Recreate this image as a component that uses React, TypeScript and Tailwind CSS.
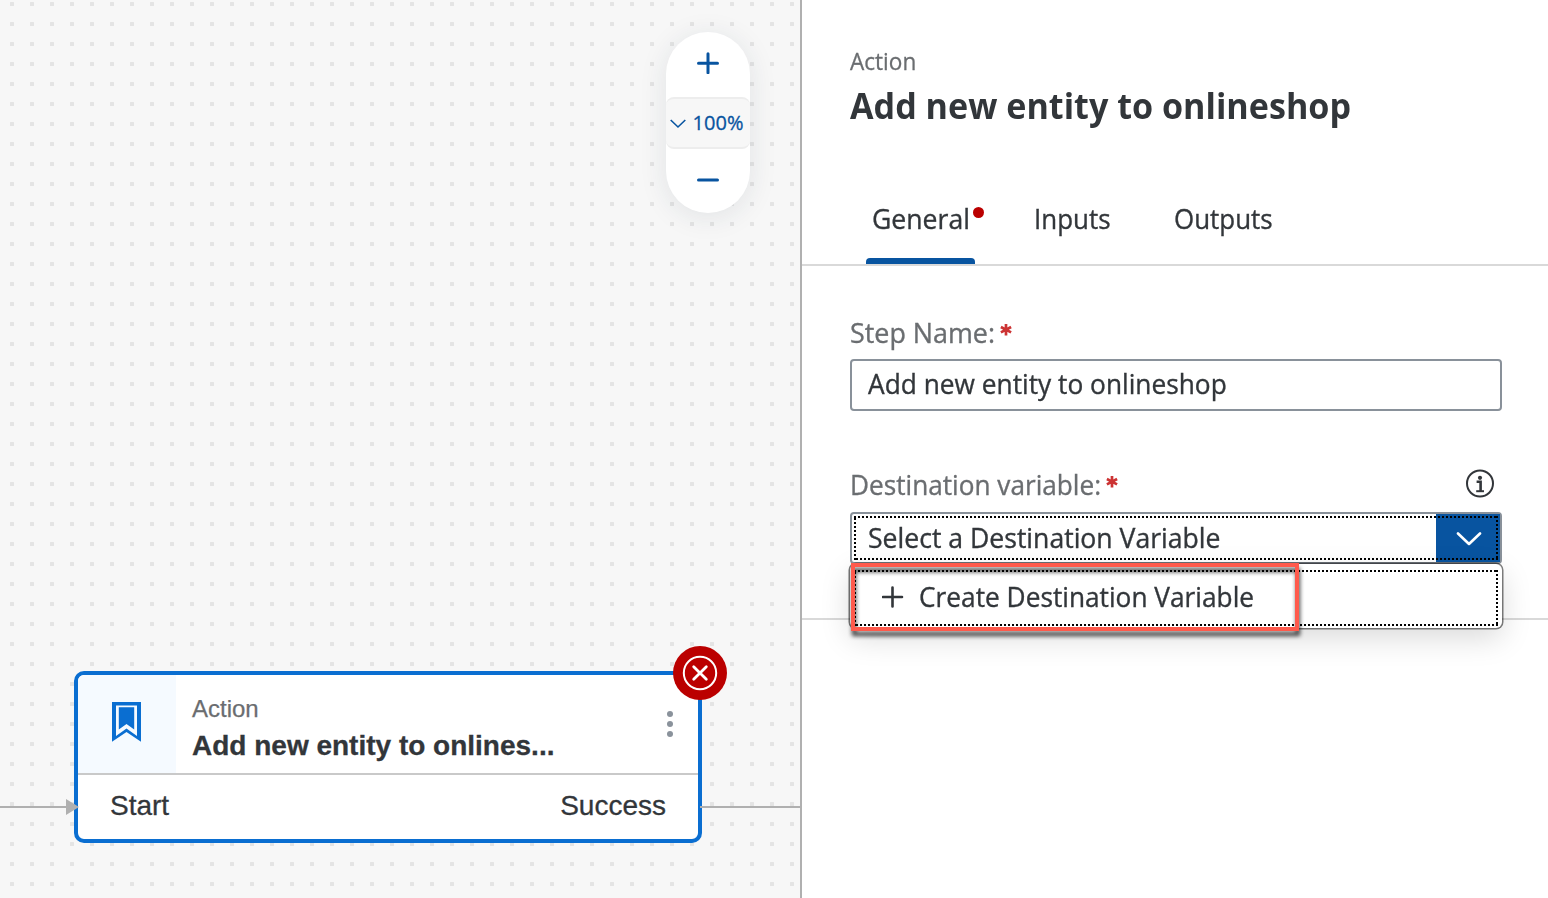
import React from "react";

const UI = "font-['Open_Sans','Noto_Sans',sans-serif]";

function Label({ text, className }: { text: string; className: string }) {
  return (
    <div className="flex items-start whitespace-nowrap">
      <span className={`block origin-left text-[27px] leading-9 text-[#6a6d70] [-webkit-text-stroke:0.35px] ${className}`}>{text}</span>
      <svg className="mt-[9px] block h-3 w-3" viewBox="0 0 12 12" stroke="#cc3333" strokeWidth="2.7">
        <path d="M6 0v11.4M.9 3l10.2 5.4M.9 8.4L11.1 3" />
      </svg>
    </div>
  );
}

function ZoomControl() {
  return (
    <div className="absolute top-8 left-[666px] flex h-[181px] w-[84px] flex-col rounded-[42px] bg-white shadow-[0_4px_28px_rgba(34,53,72,0.1)]">
      <button className="flex h-[65px] items-center justify-center pb-[3px]">
        <svg width="22" height="22" viewBox="0 0 22 22" stroke="#0854a0" strokeWidth="3" strokeLinecap="round">
          <path d="M11 1.8v19M1.5 11.3h19" />
        </svg>
      </button>
      <button className="flex h-[52px] items-center rounded-[8px] border-y-2 border-[#ededed] bg-[#f7f7f7] pl-[3.5px] text-[#0854a0]">
        <svg className="mt-0.5 shrink-0" width="16" height="10" viewBox="0 0 16 10" fill="none" stroke="#0854a0" strokeWidth="1.6">
          <path d="M.7 1L8 8L15.3 1" />
        </svg>
        <span className={`${UI} ml-[7px] text-[20px] leading-6 tracking-[0.1px] [-webkit-text-stroke:0.3px]`}>100%</span>
      </button>
      <button className="flex flex-1 items-center justify-center pb-0.5">
        <svg width="22" height="4" viewBox="0 0 22 4" stroke="#0854a0" strokeWidth="3" strokeLinecap="round">
          <path d="M1.5 2h19" />
        </svg>
      </button>
    </div>
  );
}

function ActionNode() {
  return (
    <div className="absolute top-[671px] left-[74px] flex h-[172px] w-[628px] flex-col rounded-[10px] border-4 border-[#0a6ed1] bg-white font-['Liberation_Sans',sans-serif] text-[#32363a]">
      <div className="flex h-[100px] border-b-2 border-[#c9c9c9]">
        <div className="w-[98px] rounded-tl-md bg-[#f5faff] pt-[27px] pl-[34px]">
          <svg width="29" height="40" viewBox="0 0 29 40" fill="#0a6ed1">
            <path fillRule="evenodd" d="M0 0H29V39.8L14.5 30L0 39.8ZM4 3.4V34L14.5 26.4L25 34V3.4Z" />
            <path d="M6.8 5.2H22.2V27.6L14.5 22L6.8 27.6Z" />
          </svg>
        </div>
        <div className="flex-1 pt-[18px] pl-4 whitespace-nowrap">
          <div className="text-[24px] leading-8 text-[#6a6d70] [-webkit-text-stroke:0.25px]">Action</div>
          <div className="text-[28px] leading-[42px] font-bold [-webkit-text-stroke:0.3px]">Add new entity to onlines...</div>
        </div>
        <div className="w-[38px] pt-9">
          <svg width="16" height="26" viewBox="0 0 16 26" fill="#8a929b">
            <circle cx="10" cy="3" r="3" /><circle cx="10" cy="13" r="3" /><circle cx="10" cy="23" r="3" />
          </svg>
        </div>
      </div>
      <div className="flex flex-1 items-center justify-between px-8 pb-0.5 text-[28px] [-webkit-text-stroke:0.3px]">
        <span>Start</span>
        <span>Success</span>
      </div>
    </div>
  );
}

function Canvas() {
  return (
    <main className="relative h-full w-[802px] shrink-0 overflow-hidden border-r-2 border-[#b0b0b0] bg-[#f7f7f7]">
      <svg className="absolute inset-0 h-full w-full">
        <defs>
          <pattern id="grid" width="20" height="20" patternUnits="userSpaceOnUse">
            <rect x="10" y="2" width="4" height="4" rx="0.5" fill="#e4e4e4" />
          </pattern>
        </defs>
        <rect width="100%" height="100%" fill="url(#grid)" />
      </svg>
      <ZoomControl />
      <ActionNode />
      <svg className="absolute top-[798px] left-0 h-[18px] w-full" fill="#b0b0b0">
        <path d="M0 8H66V10H0ZM66 1L79 9L66 17ZM700 8H800V10H700Z" />
      </svg>
      <svg className="absolute top-[646px] left-[673px]" width="54" height="54" viewBox="0 0 54 54" fill="none" stroke="white">
        <circle cx="27" cy="27" r="27" fill="#bb0000" stroke="none" />
        <circle cx="27" cy="27" r="16.2" strokeWidth="2" />
        <path d="M20.7 20.7L33.3 33.3M33.3 20.7L20.7 33.3" strokeWidth="2.8" strokeLinecap="round" />
      </svg>
    </main>
  );
}

function DottedFrame({ box }: { box: string }) {
  return (
    <svg className={`pointer-events-none absolute ${box}`} stroke="black" strokeWidth="4" strokeDasharray="2 2" fill="none" overflow="hidden">
      <rect width="100%" height="100%" />
    </svg>
  );
}

function DestinationSelect() {
  return (
    <div className="relative h-[52px] w-[652px] rounded border-2 border-[#89919a] bg-white [-webkit-text-stroke:0.35px]">
      <div className="flex h-full">
        <div className="flex flex-1 items-center pl-4">
          <span className="origin-left scale-x-[0.985] text-[27px] whitespace-nowrap">Select a Destination Variable</span>
        </div>
        <div className="flex w-16 items-center justify-center bg-[#0854a0]">
          <svg className="mt-0.5 ml-0.5" width="26" height="14" viewBox="0 0 26 14" fill="none" stroke="white" strokeWidth="2.6" strokeLinecap="round" strokeLinejoin="round">
            <path d="M2 1.5L13 12L24 1.5" />
          </svg>
        </div>
      </div>
      <DottedFrame box="top-[2px] left-[2px] h-[44px] w-[644px]" />
      <div className="absolute top-[50px] left-[-2px] h-[64px] w-[652px] rounded-md bg-white shadow-[0_0_0_1.5px_rgba(0,0,0,0.5),0_10px_30px_rgba(0,0,0,0.15)]">
        <div className="flex h-full items-center pt-0.5 pl-8">
          <svg width="22" height="22" viewBox="0 0 22 22" stroke="#32363a" strokeWidth="2.6" strokeLinecap="round">
            <path d="M10.5 1.5v19M1 11h19" />
          </svg>
          <span className="ml-[15px] origin-left scale-x-[0.973] text-[27px] whitespace-nowrap">Create Destination Variable</span>
        </div>
        <DottedFrame box="top-[6px] left-[4px] h-[56px] w-[644px]" />
        <div className="absolute top-[-1px] left-[1px] h-[68px] w-[448px] border-4 border-[#ff5a4c] drop-shadow-[1px_5px_2px_rgba(0,0,0,0.75)]" />
      </div>
    </div>
  );
}

function Panel() {
  return (
    <aside className={`${UI} flex h-full flex-1 flex-col bg-white text-[#32363a]`}>
      <header className="h-[170px] pt-[45px] pl-12 whitespace-nowrap">
        <div className="origin-left scale-x-[0.96] text-[23.5px] leading-8 text-[#6a6d70] [-webkit-text-stroke:0.3px]">Action</div>
        <h1 className="origin-left scale-x-[0.975] text-[35px] leading-[58px] font-bold">Add new entity to onlineshop</h1>
      </header>
      <nav className="flex h-[96px] border-b-2 border-[#d9d9d9] pl-16 text-[27px] leading-[98px] [-webkit-text-stroke:0.35px]">
        <div className="relative w-[109px] pl-1.5">
          <span className="inline-block origin-left scale-x-[0.985]">General</span>
          <span className="absolute top-[37px] left-[107px] h-[11px] w-[11px] rounded-full bg-[#bb0000]" />
          <span className="absolute bottom-0 left-0 h-1.5 w-full rounded-t bg-[#0854a0]" />
        </div>
        <div className="ml-[58.5px] w-[140px]"><span className="inline-block origin-left scale-x-[0.96]">Inputs</span></div>
        <div><span className="inline-block origin-left scale-x-[0.96]">Outputs</span></div>
      </nav>
      <section className="h-[354px] border-b-2 border-[#d9d9d9] pt-[49px] pl-12">
        <div className="flex h-[44px]"><Label text="Step Name:" className="w-[150px] scale-x-[0.995]" /></div>
        <div className="flex h-[52px] w-[652px] items-center rounded border-2 border-[#89919a] pb-px pl-4 [-webkit-text-stroke:0.35px]">
          <span className="origin-left scale-x-[0.974] text-[27px] whitespace-nowrap">Add new entity to onlineshop</span>
        </div>
        <div className="mt-[56px] flex h-[45px] w-[652px] justify-between">
          <Label text="Destination variable:" className="w-[256px] scale-x-[0.97]" />
          <svg className="mr-2" width="28" height="32" viewBox="0 0 28 32" fill="none" stroke="#32363a">
            <circle cx="14" cy="16.5" r="13" strokeWidth="2" />
            <circle cx="14" cy="10.8" r="2.1" fill="#32363a" stroke="none" />
            <path d="M10.6 14.8H14.6V24.4" strokeWidth="2.6" /><path d="M10.2 24.2H18" strokeWidth="2" />
          </svg>
        </div>
        <DestinationSelect />
      </section>
    </aside>
  );
}

export default function App() {
  return (
    <div className="flex h-[898px] w-[1548px] overflow-hidden">
      <Canvas />
      <Panel />
    </div>
  );
}
